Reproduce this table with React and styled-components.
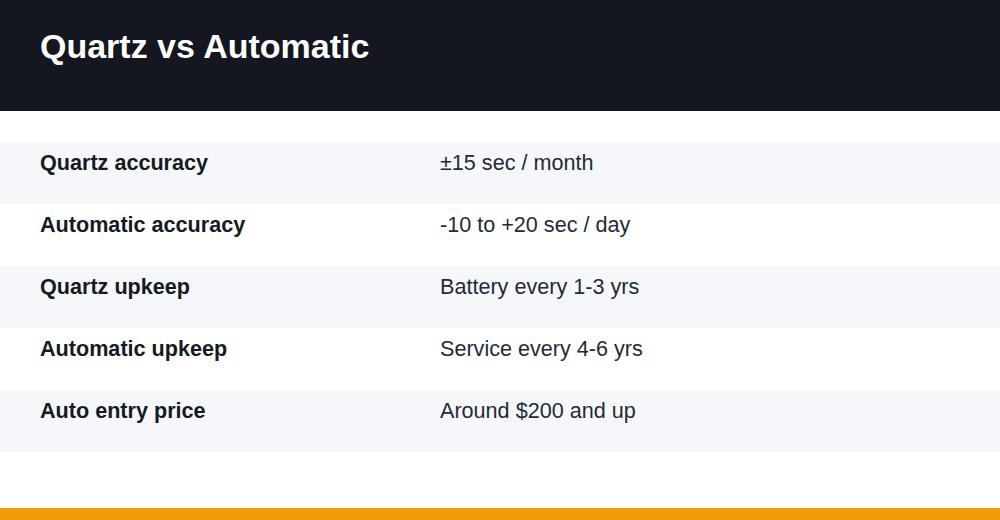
import React from "react";
import styled, { createGlobalStyle } from "styled-components";

const Global = createGlobalStyle`
  html, body { margin: 0; padding: 0; background: #ffffff; }
  body { font-family: "Liberation Sans", Arial, sans-serif; }
`;

const Page = styled.div`
  width: 1000px;
  height: 520px;
  display: flex;
  flex-direction: column;
  background: #ffffff;
  overflow: hidden;
`;

const Header = styled.header`
  height: 111px;
  box-sizing: border-box;
  padding: 26px 40px 0;
  background: #141720;
`;

const Title = styled.h1`
  margin: 0;
  font-size: 34px;
  line-height: 40px;
  font-weight: 700;
  color: #ffffff;
`;

const Table = styled.div`
  margin-top: 31px;
  display: flex;
  flex-direction: column;
  flex: 1;
`;

const Row = styled.div`
  height: 62px;
  box-sizing: border-box;
  padding: 9px 40px 0;
  display: grid;
  grid-template-columns: 400px 1fr;
  background: ${(p) => (p.$shaded ? "#f5f7fb" : "#ffffff")};
`;

const Label = styled.div`
  font-size: 21.6px;
  line-height: 24px;
  font-weight: 700;
  color: #161a22;
`;

const Value = styled.div`
  font-size: 21.6px;
  line-height: 24px;
  color: #232b37;
`;

const Accent = styled.div`
  height: 12px;
  background: #f39c0b;
`;

const rows = [
  ["Quartz accuracy", "±15 sec / month"],
  ["Automatic accuracy", "-10 to +20 sec / day"],
  ["Quartz upkeep", "Battery every 1-3 yrs"],
  ["Automatic upkeep", "Service every 4-6 yrs"],
  ["Auto entry price", "Around $200 and up"],
];

export default function App() {
  return (
    <Page>
      <Global />
      <Header>
        <Title>Quartz vs Automatic</Title>
      </Header>
      <Table>
        {rows.map(([k, v], i) => (
          <Row key={k} $shaded={i % 2 === 0}>
            <Label>{k}</Label>
            <Value>{v}</Value>
          </Row>
        ))}
      </Table>
      <Accent />
    </Page>
  );
}
